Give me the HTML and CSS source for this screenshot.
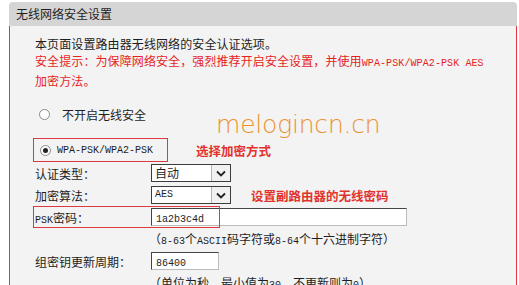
FILE: index.html
```html
<!DOCTYPE html>
<html lang="zh-CN">
<head>
    <meta charset="UTF-8">
    <title>无线网络安全设置</title>
    <link rel="stylesheet" href="styles.css">
</head>
<body>
    <div class="panel">
        <div class="panel-title">无线网络安全设置</div>
        <div class="panel-body">
            <p class="intro">
                本页面设置路由器无线网络的安全认证选项。<br>
                <span class="warn">安全提示：为保障网络安全，强烈推荐开启安全设置，并使用<span class="mono">WPA-PSK/WPA2-PSK AES</span><br>加密方法。</span>
            </p>

            <div class="radio-row first">
                <span class="radio"></span>
                <span>不开启无线安全</span>
            </div>

            <div class="radio-row">
                <div class="radio-box">
                    <span class="radio checked"></span>
                    <span class="mono">WPA-PSK/WPA2-PSK</span>
                </div>
                <span class="note note-mode">选择加密方式</span>
            </div>

            <div class="watermark">melogincn.cn</div>

            <div class="form-row">
                <label class="label">认证类型：</label>
                <div class="select">
                    <span class="select-value">自动</span>
                    <span class="select-arrow">
                        <svg width="10" height="7" viewBox="0 0 10 7"><path d="M1 1.5 L5 5.5 L9 1.5" fill="none" stroke="#222" stroke-width="1.8"/></svg>
                    </span>
                </div>
            </div>

            <div class="form-row">
                <label class="label">加密算法：</label>
                <div class="select">
                    <span class="select-value mono">AES</span>
                    <span class="select-arrow">
                        <svg width="10" height="7" viewBox="0 0 10 7"><path d="M1 1.5 L5 5.5 L9 1.5" fill="none" stroke="#222" stroke-width="1.8"/></svg>
                    </span>
                </div>
                <span class="note note-pass">设置副路由器的无线密码</span>
            </div>

            <div class="form-row psk-row">
                <label class="label"><span class="mono">PSK</span>密码：</label>
                <div class="input wide"><span class="mono">1a2b3c4d</span></div>
                <span class="mark"></span>
            </div>
            <div class="hint">（<span class="mono">8-63</span>个<span class="mono">ASCII</span>码字符或<span class="mono">8-64</span>个十六进制字符）</div>

            <div class="form-row">
                <label class="label">组密钥更新周期：</label>
                <div class="input short"><span class="mono">86400</span></div>
            </div>
            <div class="hint">（单位为秒，最小值为<span class="mono">30</span>，不更新则为<span class="mono">0</span>）</div>
        </div>
    </div>
</body>
</html>
```

FILE: styles.css
```css
:root {
    --text: #1e1e1e;
    --red: #e61e1e;
    --note: #e2322c;
    --frame: #da3a40;
    --panel-bg: #f3f3f3;
}

body {
    margin: 0;
    background: #fff;
    color: var(--text);
    font-family: "Noto Sans CJK SC", "Noto Sans", sans-serif;
    font-size: 12px;
    overflow: hidden;
}

.mono {
    font-family: "Liberation Mono", "DejaVu Sans Mono", monospace;
    font-size: 10px;
}

.panel {
    margin: 2px 0 0 9px;
    width: 508px;
}

.panel-title {
    height: 24px;
    line-height: 24px;
    padding-left: 7px;
    background: #d5d5d5;
    border-radius: 4px 4px 0 0;
}

.panel-body {
    position: relative;
    height: 300px;
    padding: 9px 0 0 25px;
    background: var(--panel-bg);
    border-left: 1px solid var(--frame);
    border-right: 1px solid var(--frame);
}

.intro {
    margin: 0;
    line-height: 17px;
    letter-spacing: 0.1px;
    white-space: nowrap;
}

.warn {
    color: var(--red);
}

.radio-row {
    display: flex;
    align-items: center;
    height: 24px;
    margin-top: 12px;
    gap: 6px;
}

.radio-row.first {
    margin-top: 13px;
    padding-left: 4px;
}

.radio {
    width: 11px;
    height: 11px;
    box-sizing: border-box;
    border: 1px solid #8a8a8a;
    border-radius: 50%;
    background: #fff;
    display: flex;
    align-items: center;
    justify-content: center;
    margin-right: 6px;
}

.radio.checked::after {
    content: "";
    width: 5px;
    height: 5px;
    border-radius: 50%;
    background: #222;
}

.radio-box {
    display: flex;
    align-items: center;
    height: 22px;
    width: 127px;
    margin-left: -2px;
    padding-left: 6px;
    border: 1px solid var(--frame);
}

.note {
    color: var(--note);
    font-weight: bold;
    font-size: 12.5px;
}

.note-mode {
    margin-left: 22px;
}

.note-pass {
    margin-left: 20px;
}

.watermark {
    position: absolute;
    left: 206px;
    top: 84px;
    font-family: "DejaVu Sans", sans-serif;
    font-weight: 200;
    font-size: 25px;
    letter-spacing: -0.2px;
    color: #ea922e;
}

.form-row {
    display: flex;
    align-items: center;
    height: 22px;
}

.label {
    width: 116px;
    flex-shrink: 0;
}

.select {
    display: flex;
    width: 80px;
    height: 18px;
    box-sizing: border-box;
    border: 1px solid #3c3c3c;
    background: #fff;
}

.select-value {
    flex: 1;
    line-height: 16px;
    padding-left: 3px;
}

.select-arrow {
    width: 18px;
    display: flex;
    align-items: center;
    justify-content: center;
    background: #f1f1f1;
    border-left: 1px solid #b5b5b5;
}

.input {
    height: 18px;
    box-sizing: border-box;
    border: 1px solid #555;
    border-color: #444 #bbb #bbb #444;
    background: #fff;
    line-height: 16px;
    padding-left: 4px;
}

.input.wide {
    width: 256px;
}

.input.short {
    width: 68px;
}

.psk-row {
    position: relative;
}

.mark {
    position: absolute;
    left: -2px;
    top: 0;
    width: 185px;
    height: 20px;
    border: 1px solid var(--frame);
}

.hint {
    padding-left: 114px;
    height: 22px;
    line-height: 22px;
}
```
